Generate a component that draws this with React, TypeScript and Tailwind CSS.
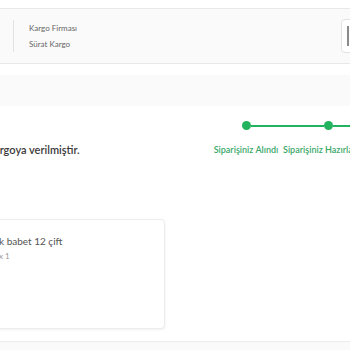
import React from 'react';

const STEPS = ['Siparişiniz Alındı', 'Siparişiniz Hazırlanıyor', 'Kargoya Verildi'];

function Stepper() {
  return (
    <div className="flex">
      {STEPS.map((label, i) => (
        <div key={label} className="flex w-[82px] shrink-0 flex-col items-center">
          <div className="flex w-full items-center">
            <div className={`h-[2px] flex-1 ${i === 0 ? 'bg-transparent' : 'bg-[#22b35e]'}`} />
            <div className="h-[9px] w-[9px] rounded-full bg-[#22b35e]" />
            <div className={`h-[2px] flex-1 ${i === STEPS.length - 1 ? 'bg-transparent' : 'bg-[#22b35e]'}`} />
          </div>
          <span className="mt-[13px] whitespace-nowrap text-[9px] font-semibold text-[#3aa869]">{label}</span>
        </div>
      ))}
    </div>
  );
}

export default function App() {
  return (
    <div className="h-[350px] w-[350px] overflow-hidden bg-white font-['Lato',sans-serif]">
      {/* Shipment info */}
      <div className="pt-[8px]">
        <div className="flex h-[56px] items-center border-y border-[#e8e8e8] bg-[#fafafa]">
          <div className="ml-[13px] h-[32px] w-px bg-[#e2e2e2]" />
          <div className="ml-[15px] flex flex-col gap-[4px] text-[8px] leading-[12px] text-[#666]">
            <span>Kargo Firması</span>
            <span>Sürat Kargo</span>
          </div>
          <div className="flex-1" />
          <div className="mr-[-40px] flex h-[34px] w-[49px] shrink-0 items-center rounded-[4px] border border-[#e2e2e2] bg-white pl-[5px]">
            <div className="h-[20px] w-[2px] bg-[#8a8a8a]" />
          </div>
        </div>
      </div>

      <div className="mt-[11px] h-[31px] bg-[#fafafa]" />

      {/* Status */}
      <div className="mt-[15px] flex h-[37px] items-start">
        <p className="ml-[-63px] mt-[21px] whitespace-nowrap text-[11px] leading-[16px] font-semibold text-[#3a3a3a]">
          Siparişiniz kargoya verilmiştir.
        </p>
        <div className="ml-auto mr-[-101px]">
          <Stepper />
        </div>
      </div>

      {/* Product card */}
      <div className="mt-[61px] ml-[-20px] h-[110px] w-[185px] rounded-[4px] border border-[#ececec] bg-white shadow-[0_1px_3px_rgba(0,0,0,0.06)]">
        <div className="ml-[18px] mt-[14px] flex flex-col">
          <span className="whitespace-nowrap text-[10px] leading-[14px] text-[#555]">k babet 12 çift</span>
          <span className="mt-[3px] text-[8px] leading-[10px] text-[#999]">x 1</span>
        </div>
      </div>

      <div className="mt-[12px] h-[20px] border-t border-[#ececec] bg-[#fafafa]" />
    </div>
  );
}
